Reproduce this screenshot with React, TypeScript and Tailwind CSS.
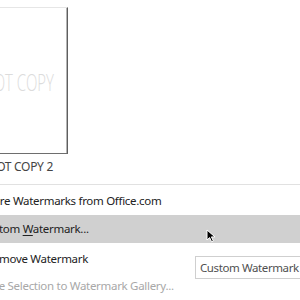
import React from "react";

const font = { fontFamily: '"Noto Sans", "Open Sans", sans-serif' };

export default function App() {
  return (
    <div className="relative w-[300px] h-[300px] overflow-hidden bg-white text-[11.5px] tracking-[-0.3px]" style={font}>
      <div className="flex flex-col">
        {/* gallery */}
        <div className="pt-[7px]">
          <div className="ml-[-20px] w-[88px] h-[147px] border-t border-[#e6e6e6] border-r border-r-[#5e5e5e] border-b border-b-[#6e6e6e] bg-white shadow-[inset_-1px_0_0_#b4b4b4] flex flex-col">
            <div className="h-[60px]" />
            <div className="flex justify-end pr-[13px]">
              <span className="text-[24px] leading-[28px] text-[#dcdcdc] inline-block origin-right scale-x-[0.62] whitespace-nowrap tracking-[0px]" style={{ fontFamily: '"Open Sans", sans-serif', fontWeight: 300 }}>
                DO NOT COPY
              </span>
            </div>
          </div>
          <div className="ml-[-20px] w-[88px] flex justify-end pr-[15px] pt-[5px] leading-[16px] text-[12px] text-[#444] whitespace-nowrap">
            DO NOT COPY 2
          </div>
        </div>
        {/* separator */}
        <div className="mt-[9px] h-px bg-[#e1e1e1]" />
        <div className="mt-[2px] flex flex-col text-[#222] whitespace-nowrap">
          <div className="h-[28px] flex items-center">
            <span className="ml-[-17px]">More Watermarks from Office.com</span>
          </div>
          <div className="h-[28px] flex items-center bg-[#d0d0d0]">
            <span className="ml-[-20px]">
              Custom <span className="underline underline-offset-2">W</span>atermark...
            </span>
          </div>
          <div className="h-[29px] flex items-center pt-[2px]">
            <span className="ml-[-14px]">Remove Watermark</span>
          </div>
          <div className="h-[28px] flex items-center text-[#a8a8a8]">
            <span className="ml-[-19px]">Save Selection to Watermark Gallery...</span>
          </div>
        </div>
        <div className="h-px bg-[#e1e1e1]" />
      </div>

      {/* tooltip */}
      <div className="absolute left-[195px] top-[256px] h-[23px] w-[130px] border border-[#cfcfcf] bg-white flex items-center pl-[4px] text-[11.5px] tracking-[-0.4px] text-[#505050] whitespace-nowrap">
        Custom Watermark
      </div>

      {/* cursor */}
      <svg className="absolute left-[206px] top-[229px]" width="12" height="14" viewBox="0 0 12 14">
        <path d="M1 1 L1 11 L3.6 8.6 L5.6 12.8 L7.4 12 L5.4 7.9 L9 7.9 Z" fill="#000" stroke="#fff" strokeWidth="1" />
      </svg>
    </div>
  );
}
